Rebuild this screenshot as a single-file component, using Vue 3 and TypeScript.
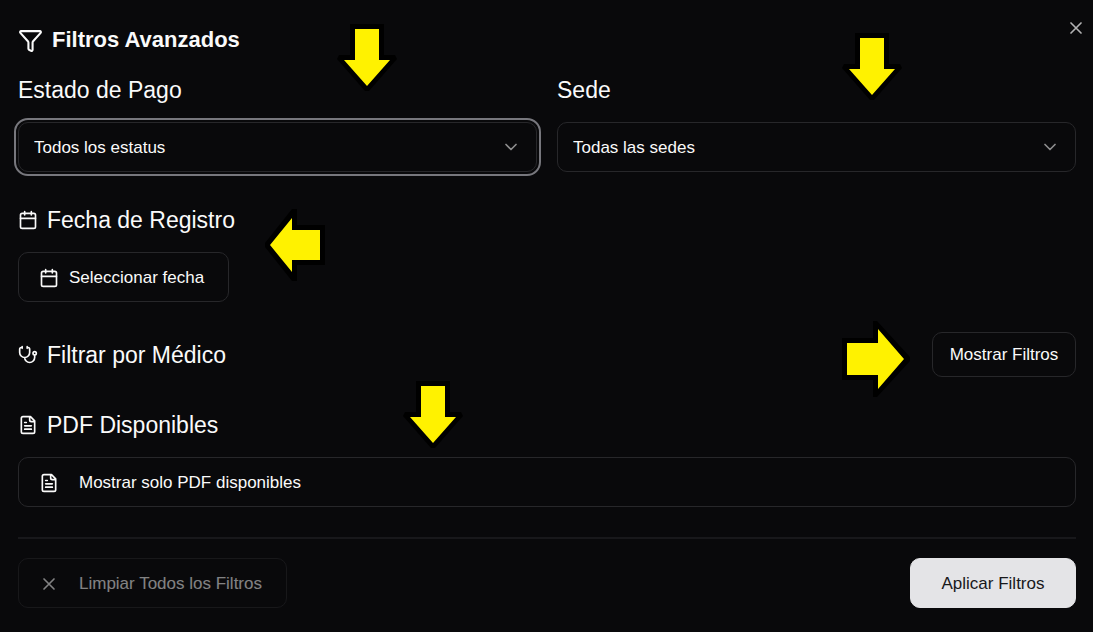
<script setup lang="ts">
import { ref } from 'vue'

const paymentStatus = ref('all')
const location = ref('all')
const onlyPdf = ref(false)
const showDoctorFilters = ref(false)

const statuses = [
  { value: 'all', label: 'Todos los estatus' },
]
const locations = [
  { value: 'all', label: 'Todas las sedes' },
]

const downOutline = '16,2 50,2 50,33 61,33 63,37 35,69 31,69 3,37 5,33 16,33'
const downBody = '21,7 45,7 45,38 56,38 33,64 10,38 21,38'
const downMarkers = ['marker-status', 'marker-location', 'marker-pdf']
</script>

<template>
  <main class="dialog" role="dialog" aria-labelledby="dialog-title">
    <button class="close" type="button" aria-label="Cerrar">
      <svg class="icon" viewBox="0 0 24 24" aria-hidden="true"><path d="M18 6 6 18M6 6l12 12" /></svg>
    </button>

    <header class="title-row">
      <svg class="icon icon-lg" viewBox="0 0 24 24" aria-hidden="true">
        <path d="M10 20a1 1 0 0 0 .553.895l2 1A1 1 0 0 0 14 21v-7a2 2 0 0 1 .517-1.341L21.74 4.67A1 1 0 0 0 21 3H3a1 1 0 0 0-.742 1.67l7.225 7.989A2 2 0 0 1 10 14z" />
      </svg>
      <h1 id="dialog-title">Filtros Avanzados</h1>
    </header>

    <div class="columns">
      <div class="field">
        <label class="heading" for="status">Estado de Pago</label>
        <div class="select focused">
          <select id="status" v-model="paymentStatus">
            <option v-for="s in statuses" :key="s.value" :value="s.value">{{ s.label }}</option>
          </select>
          <svg class="icon chevron" viewBox="0 0 24 24" aria-hidden="true"><path d="m6 9 6 6 6-6" /></svg>
        </div>
      </div>
      <div class="field">
        <label class="heading" for="location">Sede</label>
        <div class="select">
          <select id="location" v-model="location">
            <option v-for="l in locations" :key="l.value" :value="l.value">{{ l.label }}</option>
          </select>
          <svg class="icon chevron" viewBox="0 0 24 24" aria-hidden="true"><path d="m6 9 6 6 6-6" /></svg>
        </div>
      </div>
    </div>

    <section class="field">
      <h2 class="heading">
        <svg class="icon" viewBox="0 0 24 24" aria-hidden="true">
          <path d="M8 2v4M16 2v4M3 10h18" /><rect x="3" y="4" width="18" height="18" rx="2" />
        </svg>
        Fecha de Registro
      </h2>
      <button class="button date" type="button">
        <svg class="icon" viewBox="0 0 24 24" aria-hidden="true">
          <path d="M8 2v4M16 2v4M3 10h18" /><rect x="3" y="4" width="18" height="18" rx="2" />
        </svg>
        Seleccionar fecha
      </button>
    </section>

    <section class="doctor">
      <h2 class="heading">
        <svg class="icon" viewBox="0 0 24 24" aria-hidden="true">
          <path d="M11 2v2M5 2v2M5 3H4a2 2 0 0 0-2 2v4a6 6 0 0 0 12 0V5a2 2 0 0 0-2-2h-1M8 15a6 6 0 0 0 12 0v-3" />
          <circle cx="20" cy="10" r="2" />
        </svg>
        Filtrar por Médico
      </h2>
      <button class="button small" type="button" @click="showDoctorFilters = !showDoctorFilters">Mostrar Filtros</button>
    </section>

    <section class="field">
      <h2 class="heading">
        <svg class="icon" viewBox="0 0 24 24" aria-hidden="true">
          <path d="M15 2H6a2 2 0 0 0-2 2v16a2 2 0 0 0 2 2h12a2 2 0 0 0 2-2V7ZM14 2v4a2 2 0 0 0 2 2h4M10 9H8M16 13H8M16 17H8" />
        </svg>
        PDF Disponibles
      </h2>
      <button class="button wide" type="button" :aria-pressed="onlyPdf" @click="onlyPdf = !onlyPdf">
        <svg class="icon" viewBox="0 0 24 24" aria-hidden="true">
          <path d="M15 2H6a2 2 0 0 0-2 2v16a2 2 0 0 0 2 2h12a2 2 0 0 0 2-2V7ZM14 2v4a2 2 0 0 0 2 2h4M10 9H8M16 13H8M16 17H8" />
        </svg>
        Mostrar solo PDF disponibles
      </button>
    </section>

    <footer class="actions">
      <button class="button clear" type="button" disabled>
        <svg class="icon" viewBox="0 0 24 24" aria-hidden="true"><path d="M18 6 6 18M6 6l12 12" /></svg>
        Limpiar Todos los Filtros
      </button>
      <button class="button primary" type="button">Aplicar Filtros</button>
    </footer>

    <svg v-for="m in downMarkers" :key="m" class="marker" :class="m" width="66" height="71" viewBox="0 0 66 71" aria-hidden="true">
      <polygon class="outline" :points="downOutline" />
      <polygon class="body" :points="downBody" />
    </svg>
    <svg class="marker marker-date" width="62" height="74" viewBox="0 0 62 74" aria-hidden="true">
      <polygon class="outline" points="1,35 28,1 33,1 33,17 61,17 61,57 33,57 33,73 28,73 1,39" />
      <polygon class="body" points="6,37 28,10 28,22 56,22 56,52 28,52 28,64" />
    </svg>
    <svg class="marker marker-doctor" width="70" height="78" viewBox="0 0 70 78" aria-hidden="true">
      <polygon class="outline" points="1,18 32,18 32,1 36,1 69,37 69,41 36,77 32,77 32,60 1,60" />
      <polygon class="body" points="6,23 37,23 37,9 63,39 37,69 37,55 6,55" />
    </svg>
  </main>
</template>

<style>
body {
  background: #09090b;
}
</style>

<style scoped>
.dialog,
.dialog * {
  box-sizing: border-box;
}

.dialog {
  position: relative;
  min-height: 100vh;
  padding: 25px 17px 23px 18px;
  background: #09090b;
  color: #fafafa;
  font: 17px/24px "Liberation Sans", Arial, sans-serif;
}

.icon {
  flex: none;
  width: 20px;
  height: 20px;
  fill: none;
  stroke: currentColor;
  stroke-width: 2;
  stroke-linecap: round;
  stroke-linejoin: round;
}

.icon-lg {
  width: 25px;
  height: 25px;
}

.close {
  position: absolute;
  top: 18px;
  right: 7px;
  display: flex;
  padding: 0;
  border: 0;
  background: none;
  color: inherit;
  opacity: 0.7;
}

.title-row {
  display: flex;
  align-items: center;
  gap: 9px;
  margin-bottom: 20px;
}

h1 {
  margin: 0;
  font-size: 22px;
  line-height: 30px;
  font-weight: 700;
}

.columns {
  display: grid;
  grid-template-columns: 1fr 1fr;
  gap: 20px;
  margin-bottom: 33px;
}

.field {
  display: flex;
  flex-direction: column;
  align-items: flex-start;
  gap: 17px;
}

.heading {
  display: flex;
  align-items: center;
  gap: 9px;
  margin: 0;
  font-size: 23px;
  line-height: 30px;
  font-weight: 400;
}

.select {
  display: grid;
  align-items: center;
  width: 100%;
  border-radius: 10px;
}

.select.focused {
  outline: 2px solid #77777d;
  outline-offset: 2px;
}

.select select,
.chevron {
  grid-area: 1 / 1;
}

.select select {
  appearance: none;
  width: 100%;
  height: 50px;
  padding: 2px 15px 0;
  border: 1px solid #27272a;
  border-radius: 10px;
  outline: none;
  background: transparent;
  color: inherit;
  font: inherit;
}

.select option {
  background: #09090b;
}

.chevron {
  justify-self: end;
  margin-right: 16px;
  opacity: 0.55;
  pointer-events: none;
}

.button {
  display: flex;
  align-items: center;
  justify-content: center;
  gap: 10px;
  height: 50px;
  padding: 2px 24px 0 20px;
  border: 1px solid #27272a;
  border-radius: 10px;
  background: transparent;
  color: inherit;
  font: inherit;
  white-space: nowrap;
}

.doctor {
  display: flex;
  align-items: center;
  justify-content: space-between;
  margin: 30px 0 33px;
}

.small {
  height: 45px;
  min-width: 144px;
  padding: 0 15px;
}

.wide {
  justify-content: flex-start;
  gap: 20px;
  width: 100%;
}

.actions {
  display: flex;
  justify-content: space-between;
  margin-top: 30px;
  padding-top: 19px;
  border-top: 2px solid #18181b;
}

.clear {
  gap: 20px;
  opacity: 0.5;
}

.primary {
  min-width: 166px;
  padding: 2px 29px 0;
  border-color: #e4e4e7;
  background: #e4e4e7;
  color: #18181b;
}

.marker {
  position: absolute;
  pointer-events: none;
}

.outline {
  fill: #000;
}

.body {
  fill: #fff200;
}

.marker-status {
  top: 22px;
  left: 334px;
}

.marker-location {
  top: 31px;
  right: 188px;
}

.marker-pdf {
  top: 379px;
  left: 400px;
}

.marker-date {
  top: 208px;
  left: 264px;
}

.marker-doctor {
  top: 320px;
  right: 182px;
}
</style>
